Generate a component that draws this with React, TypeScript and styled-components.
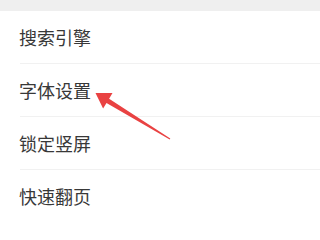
import React from 'react';
import styled, { createGlobalStyle } from 'styled-components';

const GlobalStyle = createGlobalStyle`
  html, body {
    margin: 0;
    padding: 0;
    background: #ffffff;
  }
  body {
    font-family: "Noto Sans CJK SC", "Noto Sans", sans-serif;
  }
`;

const Screen = styled.div`
  position: relative;
  width: 100%;
  min-width: 260px;
  height: 207px;
  overflow: hidden;
  background: #ffffff;
`;

const TopBar = styled.div`
  height: 11px;
  background: #efefef;
`;

const List = styled.div`
  display: flex;
  flex-direction: column;
`;

const Row = styled.div<{ $last?: boolean }>`
  display: flex;
  align-items: center;
  height: 52px;
  margin-left: 20px;
  border-bottom: 1px solid ${p => (p.$last ? 'transparent' : '#f1f1f1')};
`;

const Label = styled.span`
  margin-left: -1px;
  font-size: 18px;
  line-height: 1;
  color: #383838;
`;

const Arrow = styled.svg`
  position: absolute;
  left: 0;
  top: 0;
  pointer-events: none;
`;

const items = ['搜索引擎', '字体设置', '锁定竖屏', '快速翻页'];

export default function App() {
  return (
    <>
      <GlobalStyle />
      <Screen>
        <TopBar />
        <List>
          {items.map((text, i) => (
            <Row key={text} $last={i === items.length - 1}>
              <Label>{text}</Label>
            </Row>
          ))}
        </List>
        <Arrow width="260" height="207" viewBox="0 0 260 207">
          <polygon
            fill="#e94242"
            points="95.5,93 112.5,93.1 109.1,98.7 170.3,138.6 169.7,139.4 106.5,102.9 103.1,108.5"
          />
        </Arrow>
      </Screen>
    </>
  );
}
